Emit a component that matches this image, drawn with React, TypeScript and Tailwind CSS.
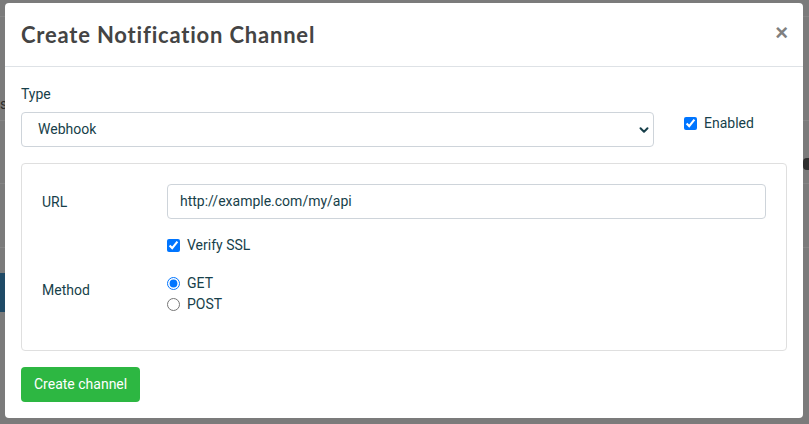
import { ChevronDown } from 'lucide-react'

export default function App() {
  return (
    <div className="relative w-[809px] h-[424px] overflow-hidden bg-[#7b7b7b] font-['Roboto',sans-serif]">
      {/* Page behind the backdrop */}
      <div className="absolute inset-0">
        <div className="absolute left-0 right-0 top-[16px] h-px bg-[#858585]" />
        <div className="absolute left-0 right-0 top-[120px] h-px bg-[#858585]" />
        <div className="absolute left-0 right-0 top-[183px] h-px bg-[#858585]" />
        <div className="absolute left-0 right-0 top-[247px] h-px bg-[#858585]" />
        <div className="absolute left-0 top-[94px] text-[14px] text-[#2a2a2a]">s</div>
        <div className="absolute left-0 top-[273px] w-[8px] h-[39px] bg-[#1f4a66]" />
        <div className="absolute right-0 top-[158px] w-[6px] h-[12px] bg-[#2e2e2e] rounded-l-sm" />
      </div>

      {/* Modal */}
      <div className="relative ml-[5px] mt-[3px] w-[798px] h-[415px] bg-white rounded-[4px] flex flex-col">
        <div className="h-[64px] px-[16px] flex items-center justify-between border-b border-[#dee2e6]">
          <h5 className="font-['Lato',sans-serif] font-bold text-[22px] text-[#444] tracking-[0.8px]">
            Create Notification Channel
          </h5>
          <span className="font-['Liberation_Sans',sans-serif] font-bold text-[22px] leading-none text-[#808080] -mr-[1px] -mt-[4px]">
            ×
          </span>
        </div>

        <div className="px-[16px] pt-[17px] text-[14px] leading-[21px] text-[#173f4a]">
          <div className="flex gap-[30px]">
            <div className="w-[633px]">
              <div className="mb-[7px]">Type</div>
              <div className="h-[35px] border border-[#ced4da] rounded-[4px] flex items-center justify-between pl-[16px] pr-[2px]">
                <span>Webhook</span>
                <ChevronDown size={14} strokeWidth={3.4} className="text-[#173f4a]" />
              </div>
            </div>
            <div className="pt-[29px]">
              <label className="flex items-center gap-[7px]">
                <input type="checkbox" defaultChecked className="w-[13px] h-[13px] m-0" />
                <span>Enabled</span>
              </label>
            </div>
          </div>

          <div className="mt-[16px] h-[188px] border border-[#dfdfdf] rounded-[4px] p-[20px]">
            <div className="flex items-center">
              <div className="w-[125px] pt-[1px]">URL</div>
              <div className="flex-1 h-[35px] border border-[#ced4da] rounded-[4px] flex items-center px-[12px]">
                http://example.com/my/api
              </div>
            </div>
            <div className="mt-[16px] ml-[125px]">
              <label className="flex items-center gap-[7px]">
                <input type="checkbox" defaultChecked className="w-[13px] h-[13px] m-0" />
                <span>Verify SSL</span>
              </label>
            </div>
            <div className="mt-[16px] flex">
              <div className="w-[125px] pt-[8px]">Method</div>
              <div className="flex flex-col pt-[1px]">
                <label className="flex items-center gap-[7px]">
                  <input type="radio" name="method" defaultChecked className="w-[13px] h-[13px] m-0" />
                  <span>GET</span>
                </label>
                <label className="flex items-center gap-[7px]">
                  <input type="radio" name="method" className="w-[13px] h-[13px] m-0" />
                  <span>POST</span>
                </label>
              </div>
            </div>
          </div>

          <button className="mt-[16px] h-[35px] px-[13px] rounded-[4px] bg-[#2db742] text-white text-[14px]">
            Create channel
          </button>
        </div>
      </div>
    </div>
  )
}
